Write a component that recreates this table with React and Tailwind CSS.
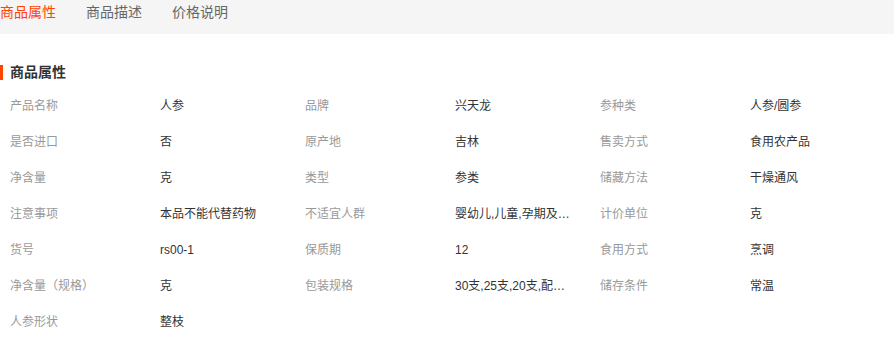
export default function App() {
  const rows = [
    [["产品名称", "人参"], ["品牌", "兴天龙"], ["参种类", "人参/圆参"]],
    [["是否进口", "否"], ["原产地", "吉林"], ["售卖方式", "食用农产品"]],
    [["净含量", "克"], ["类型", "参类"], ["储藏方法", "干燥通风"]],
    [["注意事项", "本品不能代替药物"], ["不适宜人群", "婴幼儿,儿童,孕期及哺乳期妇女"], ["计价单位", "克"]],
    [["货号", "rs00-1"], ["保质期", "12"], ["食用方式", "烹调"]],
    [["净含量（规格）", "克"], ["包装规格", "30支,25支,20支,配方参"], ["储存条件", "常温"]],
    [["人参形状", "整枝"]],
  ];
  const font = { fontFamily: '"Liberation Sans", "Noto Sans CJK SC", sans-serif' };
  return (
    <div className="w-[894px] h-[352px] bg-white overflow-hidden" style={font}>
      <div className="h-[34px] bg-[#f5f5f5] flex items-start text-[14px] leading-[24px]">
        <div className="w-[86px] text-[#ff4400]">商品属性</div>
        <div className="w-[86px] text-[#666]">商品描述</div>
        <div className="w-[86px] text-[#666]">价格说明</div>
      </div>
      <div className="h-[54px] flex items-center pt-[22px]">
        <div className="w-[3px] h-[15px] bg-[#ff4400]"></div>
        <div className="ml-[7px] text-[14px] font-bold text-[#333]">商品属性</div>
      </div>
      <div className="flex flex-col text-[12px]">
        {rows.map((r, i) => (
          <div key={i} className="h-[36px] flex items-center">
            {r.map(([k, v], j) => (
              <div key={j} className="w-[295px] flex items-center">
                <div className="w-[160px] pl-[10px] text-[#999]">{k}</div>
                <div className="w-[120px] text-[#333] truncate">{v}</div>
              </div>
            ))}
          </div>
        ))}
      </div>
    </div>
  );
}
